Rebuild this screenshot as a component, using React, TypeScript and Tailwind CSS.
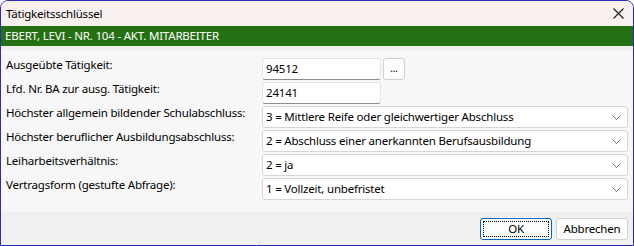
import React from 'react';

const font = { fontFamily: '"Noto Sans", "Open Sans", Arial, sans-serif' };

const Chevron = () => (
  <svg width="9" height="5" viewBox="0 0 9 5" className="shrink-0">
    <path d="M0.5 0.5 L4.5 4.5 L8.5 0.5" fill="none" stroke="#6b6b6b" strokeWidth="1" />
  </svg>
);

const TextBox: React.FC<{ value: string }> = ({ value }) => (
  <div className="w-[119px] h-[22px] bg-white border border-[#e3e3e3] border-b-[#8c8c8c] rounded-[3px] px-[3px] flex items-center">
    {value}
  </div>
);

const Select: React.FC<{ value: string }> = ({ value }) => (
  <div className="w-[366px] h-[22px] bg-white border border-[#d5d5d5] rounded-[3px] pl-[3px] pr-[6px] flex items-center justify-between">
    <span>{value}</span>
    <Chevron />
  </div>
);

const Row: React.FC<{ label: string; children: React.ReactNode }> = ({ label, children }) => (
  <div className="flex h-[22px]">
    <div className="w-[256px] whitespace-nowrap leading-[16px] -mt-[1px]">{label}</div>
    <div className="flex gap-[2px]">{children}</div>
  </div>
);

export default function App() {
  return (
    <div style={font} className="w-[634px] h-[246px] border border-[#2b2bb5] rounded-t-[8px] overflow-hidden flex flex-col bg-[#f0f0f0] text-[11.5px] tracking-[-0.2px] text-black">
      <div className="h-[25px] bg-[#f7f0ef] flex items-center justify-between pl-[5px] pr-[9px]">
        <span>Tätigkeitsschlüssel</span>
        <svg width="11" height="11" viewBox="0 0 11 11">
          <path d="M0.5 0.5 L10.5 10.5 M10.5 0.5 L0.5 10.5" stroke="#1a1a1a" strokeWidth="1.1" />
        </svg>
      </div>
      <div className="h-[20px] bg-[#237112] text-white flex items-center pl-[4px]">
        EBERT, LEVI - NR. 104 - AKT. MITARBEITER
      </div>
      <div className="h-[4px] bg-[#efefef]" />
      <div className="bg-[#f7f7f7] pt-[8px] pb-[12px] pl-[5px] flex flex-col gap-[2px]">
        <Row label="Ausgeübte Tätigkeit:">
          <TextBox value="94512" />
          <div className="w-[22px] h-[22px] bg-[#fdfdfd] border border-[#d0d0d0] rounded-[3px] flex items-center justify-center text-[10px] leading-none pb-[2px]">...</div>
        </Row>
        <Row label="Lfd. Nr. BA zur ausg. Tätigkeit:">
          <TextBox value="24141" />
        </Row>
        <Row label="Höchster allgemein bildender Schulabschluss:">
          <Select value="3 = Mittlere Reife oder gleichwertiger Abschluss" />
        </Row>
        <Row label="Höchster beruflicher Ausbildungsabschluss:">
          <Select value="2 = Abschluss einer anerkannten Berufsausbildung" />
        </Row>
        <Row label="Leiharbeitsverhältnis:">
          <Select value="2 = ja" />
        </Row>
        <Row label="Vertragsform (gestufte Abfrage):">
          <Select value="1 = Vollzeit, unbefristet" />
        </Row>
      </div>
      <div className="flex-1 bg-[#f0f0f0] flex justify-end items-start pt-[6px] pr-[5px] gap-[4px]">
        <div className="w-[72px] h-[22px] bg-[#fdfdfd] border border-[#0067c0] rounded-[3px] p-[2px]">
          <div className="w-full h-full border border-dotted border-black flex items-center justify-center">OK</div>
        </div>
        <div className="w-[72px] h-[22px] bg-[#fdfdfd] border border-[#d0d0d0] rounded-[3px] flex items-center justify-center">
          Abbrechen
        </div>
      </div>
    </div>
  );
}
